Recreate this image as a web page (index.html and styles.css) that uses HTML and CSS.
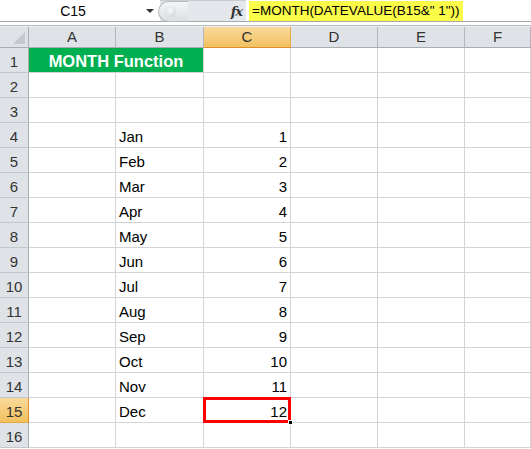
FILE: index.html
```html
<!DOCTYPE html>
<html>
<head>
<meta charset="utf-8">
<link rel="stylesheet" href="styles.css">
</head>
<body>
<div class="fbar">
  <div class="namebox"><span class="name">C15</span><span class="arrow"></span></div>
  <div class="gadget">
    <div class="knob"><div class="dot"></div></div>
    <span class="fx">fx</span>
  </div>
  <div class="formula"><span class="hl">=MONTH(DATEVALUE(B15&amp;" 1"))</span></div>
</div>
<div class="sep"></div>
<div class="sheet">
  <div class="corner"><svg width="12" height="12" viewBox="0 0 12 12"><polygon points="12,0 12,12 0,12" fill="#c5c9ce"/></svg></div>
  <div class="ch">A</div><div class="ch">B</div><div class="ch sel">C</div><div class="ch">D</div><div class="ch">E</div><div class="ch">F</div>

  <div class="rh">1</div><div class="title">MONTH Function</div><div class="c"></div><div class="c"></div><div class="c"></div><div class="c"></div>
  <div class="rh">2</div><div class="c"></div><div class="c"></div><div class="c"></div><div class="c"></div><div class="c"></div><div class="c"></div>
  <div class="rh">3</div><div class="c"></div><div class="c"></div><div class="c"></div><div class="c"></div><div class="c"></div><div class="c"></div>
  <div class="rh">4</div><div class="c"></div><div class="c t">Jan</div><div class="c n">1</div><div class="c"></div><div class="c"></div><div class="c"></div>
  <div class="rh">5</div><div class="c"></div><div class="c t">Feb</div><div class="c n">2</div><div class="c"></div><div class="c"></div><div class="c"></div>
  <div class="rh">6</div><div class="c"></div><div class="c t">Mar</div><div class="c n">3</div><div class="c"></div><div class="c"></div><div class="c"></div>
  <div class="rh">7</div><div class="c"></div><div class="c t">Apr</div><div class="c n">4</div><div class="c"></div><div class="c"></div><div class="c"></div>
  <div class="rh">8</div><div class="c"></div><div class="c t">May</div><div class="c n">5</div><div class="c"></div><div class="c"></div><div class="c"></div>
  <div class="rh">9</div><div class="c"></div><div class="c t">Jun</div><div class="c n">6</div><div class="c"></div><div class="c"></div><div class="c"></div>
  <div class="rh">10</div><div class="c"></div><div class="c t">Jul</div><div class="c n">7</div><div class="c"></div><div class="c"></div><div class="c"></div>
  <div class="rh">11</div><div class="c"></div><div class="c t">Aug</div><div class="c n">8</div><div class="c"></div><div class="c"></div><div class="c"></div>
  <div class="rh">12</div><div class="c"></div><div class="c t">Sep</div><div class="c n">9</div><div class="c"></div><div class="c"></div><div class="c"></div>
  <div class="rh">13</div><div class="c"></div><div class="c t">Oct</div><div class="c n">10</div><div class="c"></div><div class="c"></div><div class="c"></div>
  <div class="rh">14</div><div class="c"></div><div class="c t">Nov</div><div class="c n">11</div><div class="c"></div><div class="c"></div><div class="c"></div>
  <div class="rh sel">15</div><div class="c"></div><div class="c t">Dec</div><div class="c n active">12<span class="handle"></span></div><div class="c"></div><div class="c"></div><div class="c"></div>
  <div class="rh">16</div><div class="c"></div><div class="c"></div><div class="c"></div><div class="c"></div><div class="c"></div><div class="c"></div>
</div>
</body>
</html>
```

FILE: styles.css
```css
* { box-sizing: border-box; }
html, body { margin: 0; padding: 0; background: #fff; overflow: hidden; }
body { font-family: "Liberation Sans", Arial, sans-serif; width: 531px; height: 449px; }

.fbar {
  display: flex;
  height: 22px;
  border-bottom: 1px solid #a5a9ae;
  background: #fff;
}
.namebox {
  width: 160px;
  display: flex;
  align-items: center;
  position: relative;
}
.name {
  flex: 1;
  text-align: center;
  font-size: 14px;
  color: #000;
  padding-left: 0;
}
.arrow {
  width: 0; height: 0;
  border-left: 4px solid transparent;
  border-right: 4px solid transparent;
  border-top: 4px solid #333;
  margin-right: 6px;
  margin-top: 1px;
}
.gadget {
  width: 86px;
  background: #e4e7eb;
  border-top: 1px solid #c9ccd0;
  display: flex;
  align-items: center;
  justify-content: space-between;
  padding-right: 4px;
}
.knob {
  width: 30px;
  height: 21px;
  border-radius: 11px 0 0 11px;
  border: 1px solid #b5b9be;
  border-right: none;
  background: linear-gradient(#f4f5f6, #dcdfe3);
  position: relative;
  margin-left: -2px;
}
.dot {
  position: absolute;
  left: 6px; top: 4px;
  width: 11px; height: 11px;
  border-radius: 50%;
  background: radial-gradient(circle at 45% 40%, #fafafa, #c9cdd2);
}
.fx {
  font-family: "DejaVu Serif", "Liberation Serif", serif;
  font-style: italic;
  font-weight: bold;
  font-size: 13px;
  color: #333;
  letter-spacing: -1px;
}
.formula {
  flex: 1;
  display: flex;
  align-items: center;
  padding-left: 3px;
}
.hl {
  background: #fbfb4a;
  font-size: 13.5px;
  color: #000;
  padding: 1px 3px 1px 3px;
  line-height: 18px;
}
.sep {
  height: 4px;
  border-bottom: 1px solid #b6babf;
  background: #fff;
}

.sheet {
  display: grid;
  grid-template-columns: 29px 87px 88px 87px 87px 87px 66px;
  grid-template-rows: 21px repeat(16, 25px);
  border-top: 1px solid #eef0f2;
}
.corner {
  background: #dfe3e8;
  border-right: 1px solid #a9adb2;
  border-bottom: 1px solid #a9adb2;
  display: flex;
  align-items: flex-end;
  justify-content: flex-end;
  padding: 0 3px 3px 0;
}
.ch {
  background: #dfe3e8;
  border-right: 1px solid #b3b7bc;
  border-bottom: 1px solid #a9adb2;
  text-align: center;
  font-size: 15px;
  line-height: 20px;
  color: #333;
}
.ch.sel {
  background: linear-gradient(#f9d99b, #f1c15f);
  border-right: 1px solid #e3a848;
  border-bottom: 1px solid #e08d2b;
}
.rh {
  background: #dfe3e8;
  border-right: 1px solid #a9adb2;
  border-bottom: 1px solid #c4c8cd;
  text-align: center;
  font-size: 15px;
  padding-top: 3px;
  line-height: 21px;
  color: #333;
}
.rh.sel {
  background: linear-gradient(#f9d99b, #f1c15f);
  border-right: 1px solid #e08d2b;
  border-bottom: 1px solid #e3a848;
}
.c {
  border-right: 1px solid #d4d4d4;
  border-bottom: 1px solid #d4d4d4;
  font-size: 15px;
  padding-top: 4px;
  line-height: 20px;
  color: #000;
}
.title {
  grid-column: span 2;
  background: #00b050;
  color: #fff;
  font-weight: bold;
  font-size: 16.5px;
  padding-top: 3px;
  line-height: 21px;
  text-align: center;
  border-bottom: 1px solid #d4d4d4;
  border-right: 1px solid #d4d4d4;
}
.t { padding-left: 3px; }
.n { text-align: right; padding-right: 3px; }
.active {
  position: relative;
}
.active::before {
  content: "";
  position: absolute;
  left: -1px; top: -1px; right: -1px; bottom: -1px;
  border: 3px solid #ff0000;
  pointer-events: none;
}
.handle {
  position: absolute;
  right: -3px;
  bottom: -3px;
  width: 5px; height: 5px;
  background: #000;
  border: 1px solid #fff;
}
```
